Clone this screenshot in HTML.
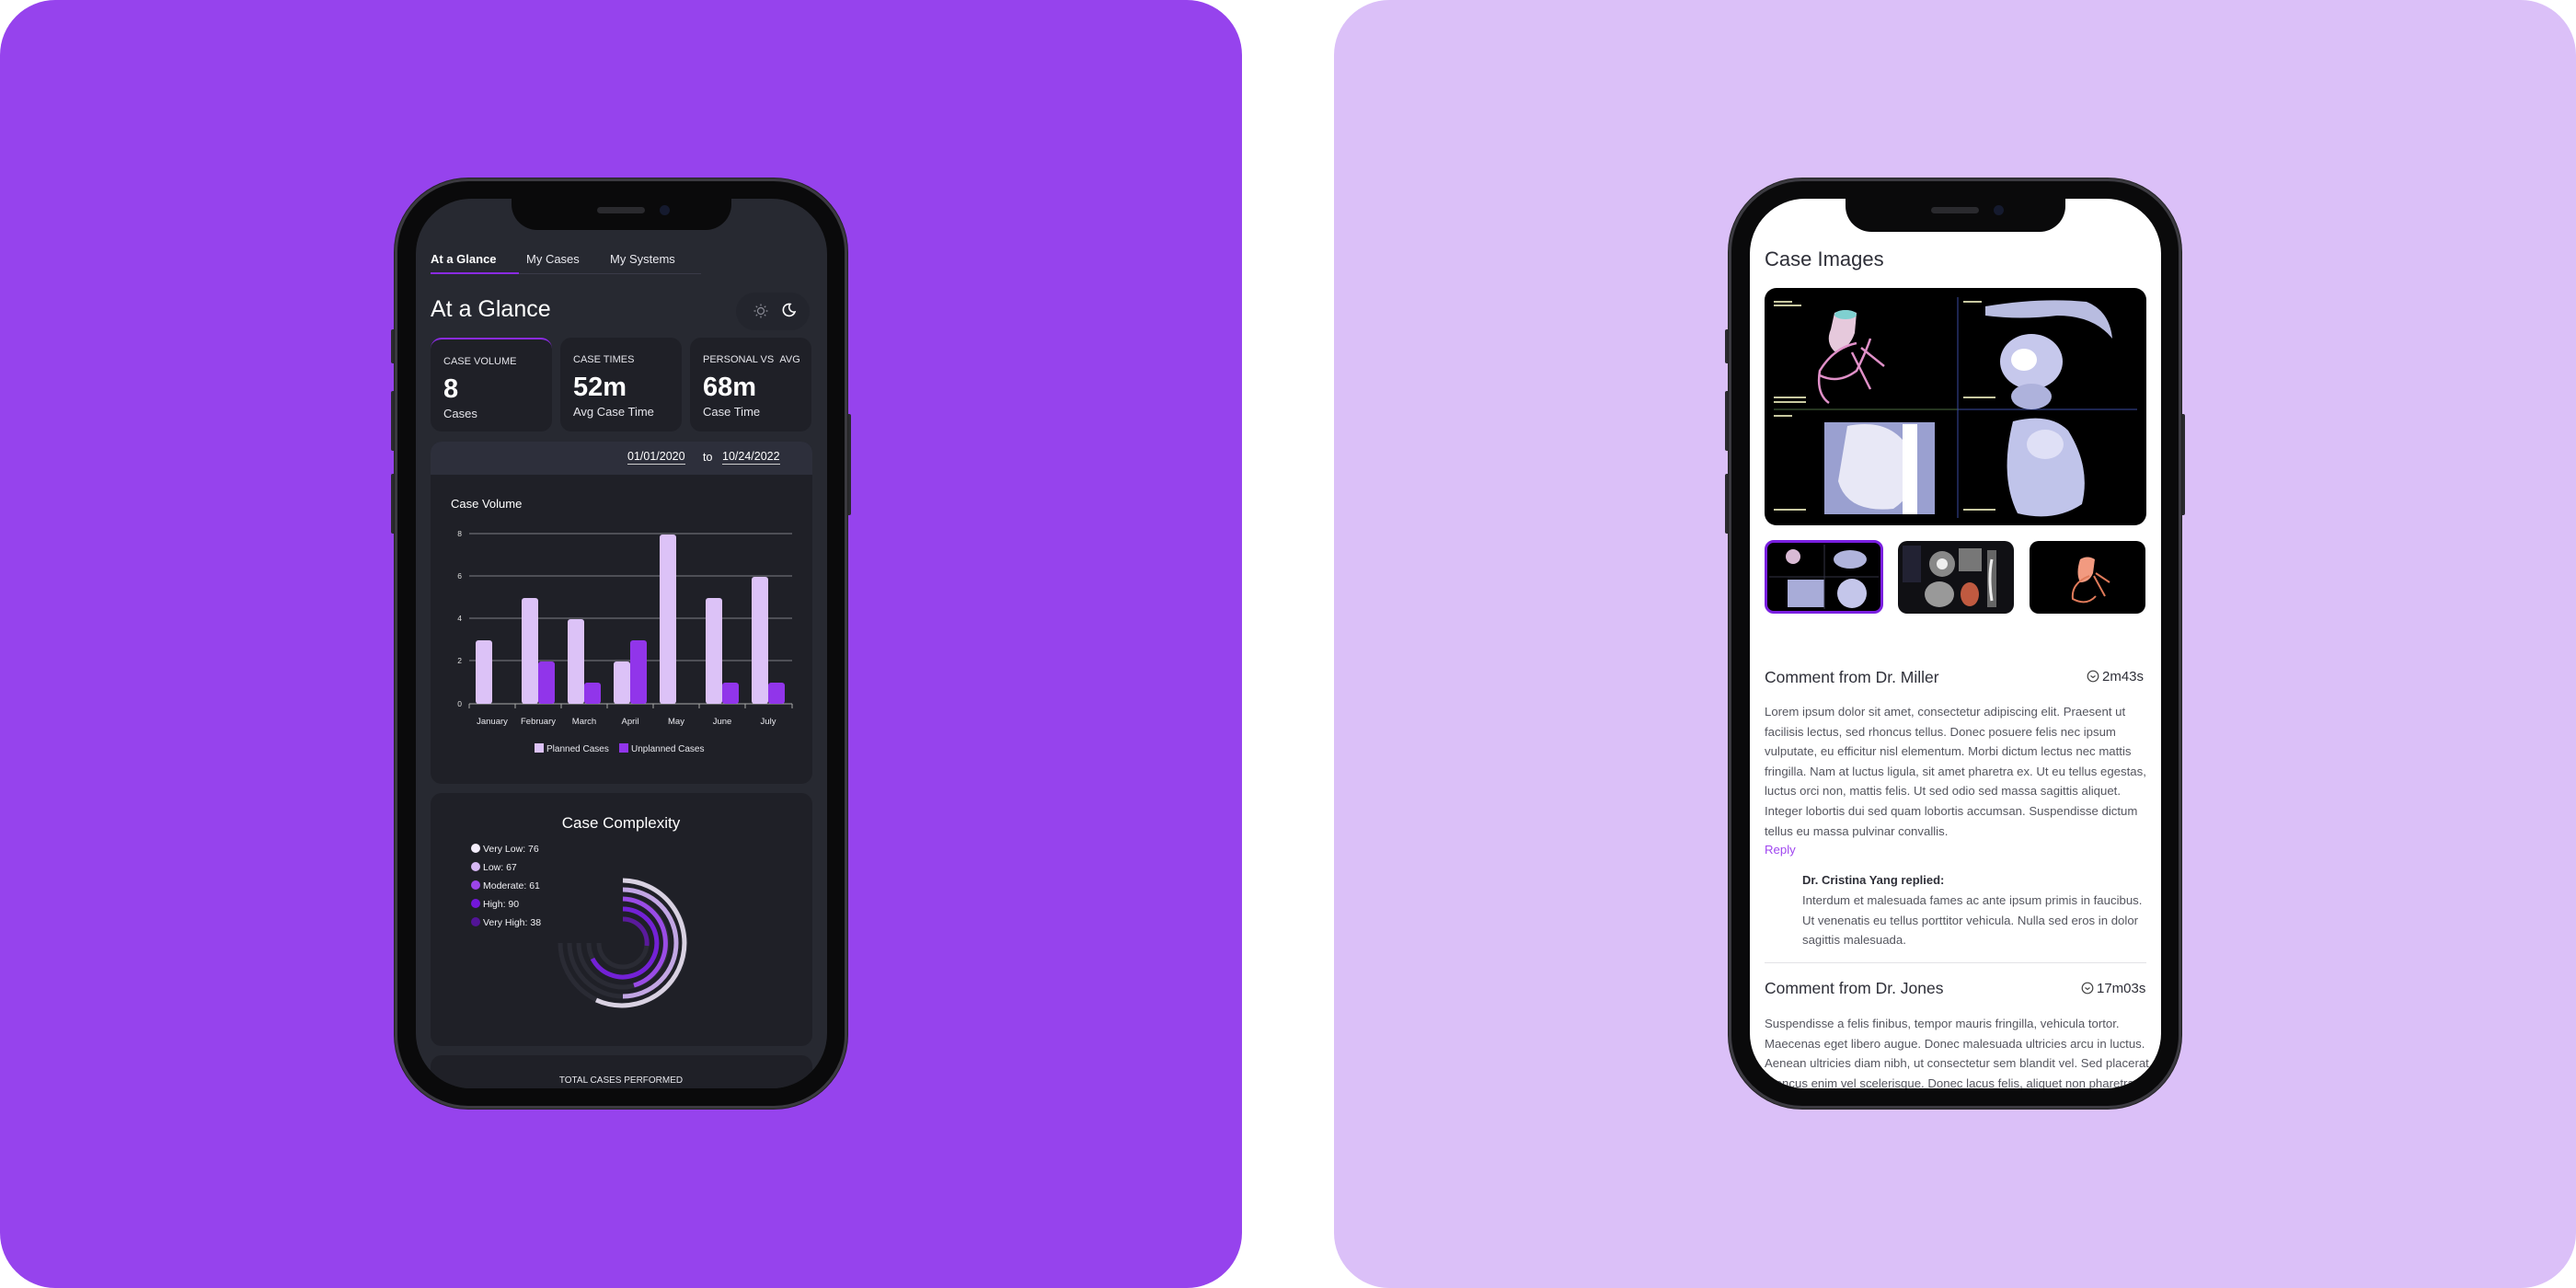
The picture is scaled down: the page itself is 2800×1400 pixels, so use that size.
<!DOCTYPE html>
<html><head><meta charset="utf-8"><style>
*{margin:0;padding:0;box-sizing:border-box}
body{width:2800px;height:1400px;background:#fff;position:relative;overflow:hidden;font-family:"Liberation Sans",sans-serif}
.abs{position:absolute}
.bgL{left:0;top:0;width:1350px;height:1400px;background:#9643ed;border-radius:60px}
.bgR{left:1450px;top:0;width:1350px;height:1400px;background:#dbc0f8;border-radius:60px}
.phone{width:492px;height:1011px;top:194px;background:#0a0a0b;border-radius:80px;border:3px solid #3b3a40;box-shadow:0 0 0 1px #222}
.btn{background:#2a2a2e;width:5px;border-radius:2px}
.screen{left:20px;top:19px;width:447px;height:967px;border-radius:60px;overflow:hidden}
.notch{left:104px;top:0;width:239px;height:34px;background:#0a0a0b;border-radius:0 0 28px 28px}
.spk{left:93px;top:9px;width:52px;height:7px;border-radius:4px;background:#2a2a2e}
.cam{left:161px;top:7px;width:11px;height:11px;border-radius:50%;background:#151a2e}
.t{position:absolute;white-space:nowrap}
.card{position:absolute;top:151px;width:132px;height:102px;background:#1f2027;border-radius:12px;color:#fff}
.card .l{position:absolute;left:14px;top:18px;font-size:11px;color:#e4e4ea}
.card .n{position:absolute;left:14px;top:38px;font-size:29px;font-weight:bold}
.card .s{position:absolute;left:14px;top:73px;font-size:13px;color:#e4e4ea}
.p{font-size:13.2px;color:#55565f;line-height:21.6px;white-space:nowrap}
</style></head><body>
<div class="abs bgL"></div>
<div class="abs bgR"></div>

<!-- LEFT PHONE -->
<div class="abs btn" style="left:425px;top:358px;height:37px"></div>
<div class="abs btn" style="left:425px;top:425px;height:65px"></div>
<div class="abs btn" style="left:425px;top:515px;height:65px"></div>
<div class="abs btn" style="left:920px;top:450px;height:110px"></div>
<div class="abs phone" style="left:429px">
 <div class="abs screen" style="background:#272931">
  <div class="t" style="left:16px;top:58px;font-size:13px;font-weight:bold;color:#fff">At a Glance</div>
  <div class="t" style="left:120px;top:58px;font-size:13px;color:#e8e8ee">My Cases</div>
  <div class="t" style="left:211px;top:58px;font-size:13px;color:#e8e8ee">My Systems</div>
  <div class="abs" style="left:16px;top:81px;width:294px;height:1px;background:#3a3b48"></div>
  <div class="abs" style="left:16px;top:80px;width:96px;height:2px;background:#8a2be2"></div>
  <div class="t" style="left:16px;top:106px;font-size:25px;color:#fff">At a Glance</div>
  <div class="abs" style="left:348px;top:102px;width:80px;height:41px;border-radius:21px;background:#23252d"></div>
  <svg class="abs" style="left:366px;top:113px" width="18" height="18" viewBox="0 0 18 18" fill="none" stroke="#8a8b95" stroke-width="1.2"><circle cx="9" cy="9" r="3.5"/><path d="M9 1.5v2M9 14.5v2M1.5 9h2M14.5 9h2M3.7 3.7l1.4 1.4M12.9 12.9l1.4 1.4M3.7 14.3l1.4-1.4M12.9 5.1l1.4-1.4"/></svg>
  <svg class="abs" style="left:396px;top:112px" width="18" height="18" viewBox="0 0 18 18" fill="none" stroke="#fff" stroke-width="1.6"><path d="M11 2.5A6.5 6.5 0 1 0 16 11 5.2 5.2 0 0 1 11 2.5z"/></svg>
  <div class="card" style="left:16px;border-top:2px solid #8a2be2"><div class="l">CASE VOLUME</div><div class="n">8</div><div class="s">Cases</div></div>
  <div class="card" style="left:157px"><div class="l">CASE TIMES</div><div class="n">52m</div><div class="s">Avg Case Time</div></div>
  <div class="card" style="left:298px"><div class="l">PERSONAL VS &nbsp;AVG</div><div class="n">68m</div><div class="s">Case Time</div></div>
  <div class="abs" style="left:16px;top:264px;width:415px;height:372px;border-radius:12px;background:#1f2027;overflow:hidden">
   <div class="abs" style="left:0;top:0;width:415px;height:36px;background:#2d2f3b"></div>
   <div class="t" style="left:214px;top:9px;font-size:12.5px;color:#fff;border-bottom:1px solid #ccc;padding-bottom:1px">01/01/2020</div>
   <div class="t" style="left:296px;top:10px;font-size:12.5px;color:#fff">to</div>
   <div class="t" style="left:317px;top:9px;font-size:12.5px;color:#fff;border-bottom:1px solid #ccc;padding-bottom:1px">10/24/2022</div>
  </div>
  <div class="t" style="left:38px;top:324px;font-size:13px;color:#fff">Case Volume</div>
  <svg class="abs" style="left:0;top:0" width="447" height="967">
   <g stroke="#7d7e86" stroke-width="1">
    <line x1="58" y1="364" x2="409" y2="364"/><line x1="58" y1="410" x2="409" y2="410"/><line x1="58" y1="456" x2="409" y2="456"/><line x1="58" y1="502" x2="409" y2="502"/>
    <line x1="58" y1="549" x2="409" y2="549" stroke="#aaa"/>
    <path d="M58 549v5M108 549v5M158 549v5M208 549v5M258 549v5M308 549v5M358 549v5M409 549v5" stroke="#aaa"/>
   </g>
   <g font-family="Liberation Sans" font-size="8.5" fill="#ddd" text-anchor="end"><text x="50" y="367">8</text><text x="50" y="413">6</text><text x="50" y="459">4</text><text x="50" y="505">2</text><text x="50" y="552">0</text></g>
   <g fill="#dcc2f7">
    <rect x="65" y="480" width="18" height="69" rx="3"/><rect x="115" y="434" width="18" height="115" rx="3"/><rect x="165" y="457" width="18" height="92" rx="3"/><rect x="215" y="503" width="18" height="46" rx="3"/><rect x="265" y="365" width="18" height="184" rx="3"/><rect x="315" y="434" width="18" height="115" rx="3"/><rect x="365" y="411" width="18" height="138" rx="3"/>
   </g>
   <g fill="#9135ea">
    <rect x="133" y="503" width="18" height="46" rx="3"/><rect x="183" y="526" width="18" height="23" rx="3"/><rect x="233" y="480" width="18" height="69" rx="3"/><rect x="333" y="526" width="18" height="23" rx="3"/><rect x="383" y="526" width="18" height="23" rx="3"/>
   </g>
   <g font-family="Liberation Sans" font-size="9.5" fill="#e8e8ee" text-anchor="middle"><text x="83" y="571">January</text><text x="133" y="571">February</text><text x="183" y="571">March</text><text x="233" y="571">April</text><text x="283" y="571">May</text><text x="333" y="571">June</text><text x="383" y="571">July</text></g>
   <rect x="129" y="592" width="10" height="10" fill="#dcc2f7"/><text x="142" y="601" font-family="Liberation Sans" font-size="10" fill="#e8e8ee">Planned Cases</text>
   <rect x="221" y="592" width="10" height="10" fill="#9135ea"/><text x="234" y="601" font-family="Liberation Sans" font-size="10" fill="#e8e8ee">Unplanned Cases</text>
   <rect x="16" y="646" width="415" height="275" rx="12" fill="#1f2027"/>
   <text x="223" y="684" text-anchor="middle" font-family="Liberation Sans" font-size="17" fill="#fff">Case Complexity</text>
   <g font-family="Liberation Sans" font-size="10.5" fill="#f0f0f4">
    <circle cx="65" cy="706" r="5" fill="#f4eefc"/><text x="73" y="710">Very Low: 76</text>
    <circle cx="65" cy="726" r="5" fill="#d6b8f4"/><text x="73" y="730">Low: 67</text>
    <circle cx="65" cy="746" r="5" fill="#9c45ea"/><text x="73" y="750">Moderate: 61</text>
    <circle cx="65" cy="766" r="5" fill="#7317da"/><text x="73" y="770">High: 90</text>
    <circle cx="65" cy="786" r="5" fill="#521497"/><text x="73" y="790">Very High: 38</text>
   </g>
   <g fill="none" stroke-width="5" stroke="#2a2b34">
    <path d="M225 741 A68 68 0 1 1 157 809"/><path d="M225 751 A58 58 0 1 1 167 809"/><path d="M225 761 A48 48 0 1 1 177 809"/><path d="M225 772 A37 37 0 1 1 188 809"/><path d="M225 783 A26 26 0 1 1 199 809"/>
   </g>
   <g fill="none" stroke-width="5">
    <path d="M225 741 A68 68 0 1 1 196 871" stroke="#d9d2e2"/>
    <path d="M225 751 A58 58 0 0 1 225 867" stroke="#c2a6e4"/>
    <path d="M225 761 A48 48 0 0 1 237 855" stroke="#9a4ce6"/>
    <path d="M225 772 A37 37 0 1 1 192 826" stroke="#7321d6"/>
    <path d="M225 783 A26 26 0 0 1 251 812" stroke="#5a1a9c"/>
   </g>
   <rect x="16" y="931" width="415" height="60" rx="12" fill="#1f2027"/>
   <text x="223" y="961" text-anchor="middle" font-family="Liberation Sans" font-size="10" fill="#e8e8ee">TOTAL CASES PERFORMED</text>
  </svg>
  <div class="abs notch"><div class="abs spk"></div><div class="abs cam"></div></div>
 </div>
</div>

<!-- RIGHT PHONE -->
<div class="abs btn" style="left:1875px;top:358px;height:37px"></div>
<div class="abs btn" style="left:1875px;top:425px;height:65px"></div>
<div class="abs btn" style="left:1875px;top:515px;height:65px"></div>
<div class="abs btn" style="left:2370px;top:450px;height:110px"></div>
<div class="abs phone" style="left:1879px">
 <div class="abs screen" style="background:#fff">
  <div class="t" style="left:16px;top:53px;font-size:22px;color:#2e2f38">Case Images</div>
  <svg class="abs" style="left:16px;top:97px" width="415" height="258" viewBox="0 0 415 258">
   <rect width="415" height="258" rx="13" fill="#000"/>
   <line x1="210" y1="10" x2="210" y2="250" stroke="#3a4aa0" stroke-width="1"/>
   <line x1="10" y1="132" x2="405" y2="132" stroke="#4a6a40" stroke-width="1"/>
   <line x1="210" y1="132" x2="405" y2="132" stroke="#3a4aa0" stroke-width="1"/>
   <path d="M76 27 q12 -6 24 0 l-2 22 q-6 18 -22 20 q-10 -10 -4 -24z" fill="#e6c9dc"/>
   <ellipse cx="88" cy="29" rx="12" ry="5" fill="#7fd0d0"/>
   <path d="M100 60 q-25 5 -40 30 q-4 25 10 35 M60 95 q20 10 40 -5 q10 -20 15 -35 M95 70 l20 40 M105 65 l25 20" stroke="#e090c8" stroke-width="2.5" fill="none"/>
   <path d="M240 20 q60 -10 110 -5 q25 10 28 40 q-20 -25 -60 -25 q-40 5 -78 0z" fill="#b8bce0"/>
   <ellipse cx="290" cy="80" rx="34" ry="30" fill="#c6c8ec"/><ellipse cx="290" cy="118" rx="22" ry="14" fill="#aeb2dc"/>
   <ellipse cx="282" cy="78" rx="14" ry="12" fill="#fff"/>
   <rect x="65" y="146" width="120" height="100" fill="#9aa0d0"/>
   <path d="M90 150 q50 -10 70 30 q10 40 -20 60 q-50 5 -60 -30z" fill="#e8e8f6"/>
   <rect x="150" y="148" width="16" height="98" fill="#fff"/>
   <path d="M270 145 q40 -10 60 10 q25 40 15 80 q-30 20 -70 10 q-20 -40 -5 -100z" fill="#c0c4ea"/>
   <ellipse cx="305" cy="170" rx="20" ry="16" fill="#dfe0f6"/>
   <g fill="#c8c8a0">
    <rect x="10" y="14" width="20" height="2"/><rect x="10" y="18" width="30" height="2"/><rect x="10" y="118" width="35" height="2"/><rect x="10" y="123" width="35" height="2"/>
    <rect x="216" y="14" width="20" height="2"/><rect x="216" y="118" width="35" height="2"/><rect x="10" y="138" width="20" height="2"/><rect x="10" y="240" width="35" height="2"/><rect x="216" y="240" width="35" height="2"/>
   </g>
  </svg>
  <div class="abs" style="left:16px;top:371px;width:129px;height:80px;border:3px solid #7a1fe0;border-radius:10px;background:#000;overflow:hidden">
   <svg width="123" height="74"><ellipse cx="28" cy="15" rx="8" ry="8" fill="#d9bad4"/><ellipse cx="90" cy="18" rx="18" ry="10" fill="#b0b4dc"/><rect x="22" y="40" width="40" height="30" fill="#a8acd8"/><ellipse cx="92" cy="55" rx="16" ry="16" fill="#c4c6ea"/><line x1="62" y1="2" x2="62" y2="72" stroke="#334"/><line x1="2" y1="37" x2="121" y2="37" stroke="#334"/></svg>
  </div>
  <div class="abs" style="left:161px;top:372px;width:126px;height:79px;border-radius:10px;background:#101014;overflow:hidden">
   <svg width="126" height="79"><rect x="5" y="5" width="20" height="40" fill="#223"/><ellipse cx="48" cy="25" rx="14" ry="14" fill="#888"/><ellipse cx="48" cy="25" rx="6" ry="6" fill="#eee"/><rect x="66" y="8" width="25" height="25" fill="#777"/><rect x="97" y="10" width="10" height="62" fill="#666"/><path d="M102 20 q-4 20 0 45" stroke="#eee" stroke-width="3" fill="none"/><ellipse cx="45" cy="58" rx="16" ry="14" fill="#999"/><ellipse cx="78" cy="58" rx="10" ry="13" fill="#c05a40"/></svg>
  </div>
  <div class="abs" style="left:304px;top:372px;width:126px;height:79px;border-radius:10px;background:#000;overflow:hidden">
   <svg width="126" height="79"><path d="M55 20 q8 -5 16 0 l-2 15 q-4 10 -14 10 q-5 -10 0 -25z" fill="#f29a80"/><path d="M65 38 q-20 8 -18 25 q15 8 25 -3 M70 38 l12 22 M72 35 l15 10" stroke="#e07a5a" stroke-width="2" fill="none"/></svg>
  </div>
  <div class="t" style="left:16px;top:510px;font-size:17.5px;color:#2e2f38">Comment from Dr. Miller</div>
  <svg class="abs" style="left:366px;top:512px" width="14" height="14" viewBox="0 0 14 14" fill="none" stroke="#444" stroke-width="1.2"><circle cx="7" cy="7" r="5.8"/><path d="M4.5 6.5l2.5 2 2.5-2"/></svg>
  <div class="t" style="left:383px;top:511px;font-size:15px;color:#2e2f38">2m43s</div>
  <div class="t p" style="left:16px;top:547px">Lorem ipsum dolor sit amet, consectetur adipiscing elit. Praesent ut<br>facilisis lectus, sed rhoncus tellus. Donec posuere felis nec ipsum<br>vulputate, eu efficitur nisl elementum. Morbi dictum lectus nec mattis<br>fringilla. Nam at luctus ligula, sit amet pharetra ex. Ut eu tellus egestas,<br>luctus orci non, mattis felis. Ut sed odio sed massa sagittis aliquet.<br>Integer lobortis dui sed quam lobortis accumsan. Suspendisse dictum<br>tellus eu massa pulvinar convallis.</div>
  <div class="t" style="left:16px;top:700px;font-size:13.2px;color:#a046f0">Reply</div>
  <div class="t" style="left:57px;top:733px;font-size:13px;font-weight:bold;color:#2e2f38">Dr. Cristina Yang replied:</div>
  <div class="t p" style="left:57px;top:752px">Interdum et malesuada fames ac ante ipsum primis in faucibus.<br>Ut venenatis eu tellus porttitor vehicula. Nulla sed eros in dolor<br>sagittis malesuada.</div>
  <div class="abs" style="left:16px;top:830px;width:415px;height:1px;background:#e2e2e6"></div>
  <div class="t" style="left:16px;top:848px;font-size:17.5px;color:#2e2f38">Comment from Dr. Jones</div>
  <svg class="abs" style="left:360px;top:851px" width="14" height="14" viewBox="0 0 14 14" fill="none" stroke="#444" stroke-width="1.2"><circle cx="7" cy="7" r="5.8"/><path d="M4.5 6.5l2.5 2 2.5-2"/></svg>
  <div class="t" style="left:377px;top:850px;font-size:15px;color:#2e2f38">17m03s</div>
  <div class="t p" style="left:16px;top:886px">Suspendisse a felis finibus, tempor mauris fringilla, vehicula tortor.<br>Maecenas eget libero augue. Donec malesuada ultricies arcu in luctus.<br>Aenean ultricies diam nibh, ut consectetur sem blandit vel. Sed placerat<br>rhoncus enim vel scelerisque. Donec lacus felis, aliquet non pharetra in</div>
  <div class="abs notch" style="height:36px"><div class="abs spk"></div><div class="abs cam"></div></div>
 </div>
</div>
</body></html>
